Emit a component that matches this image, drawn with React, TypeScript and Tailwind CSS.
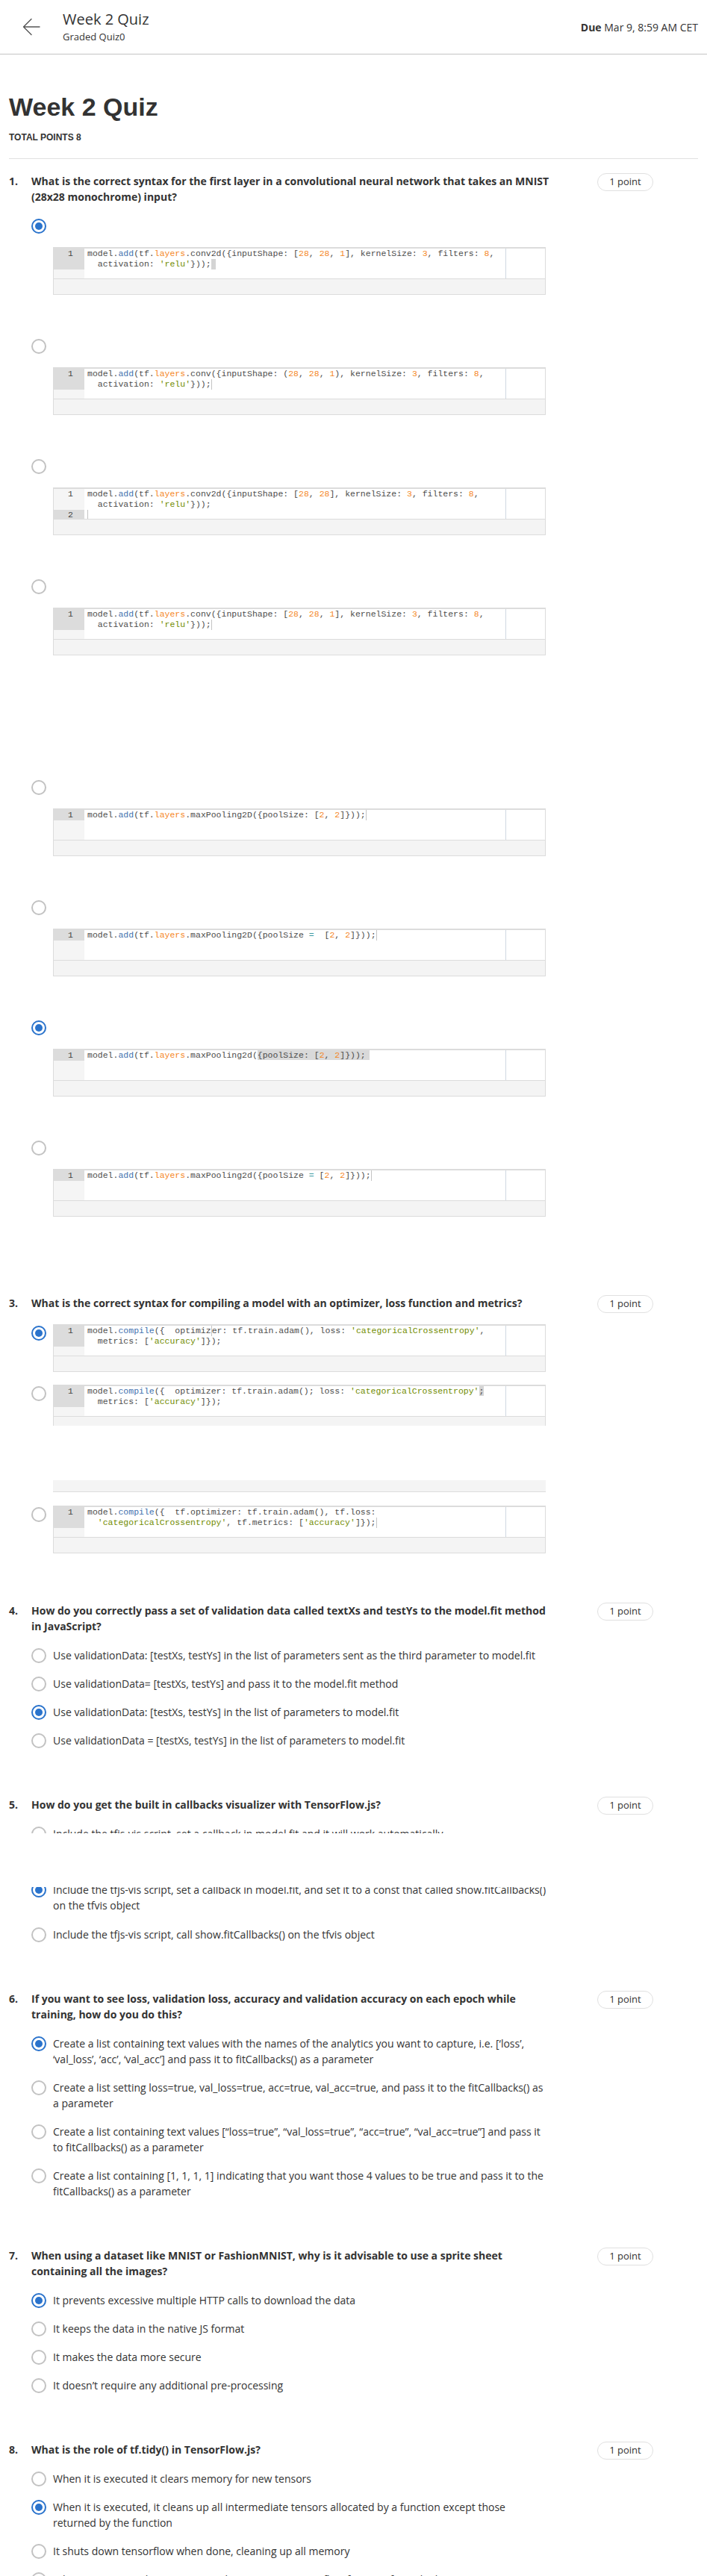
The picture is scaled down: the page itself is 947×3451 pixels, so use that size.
import React from "react";

const MONO = "font-['Liberation_Mono',monospace]";

const TOK = /('[^']*'|\b\d+\b|\badd\b|\bcompile\b|\blayers\b|=)/g;

function hl(s: string, kb = "k") {
  const parts = s.split(TOK);
  return parts.map((p, i) => {
    if (i % 2 === 0) return p ? <React.Fragment key={kb + i}>{p}</React.Fragment> : null;
    let cls = "text-[#3e999f]";
    if (p.startsWith("'")) cls = "text-[#718c00]";
    else if (/^\d+$/.test(p)) cls = "text-[#f5871f]";
    else if (p === "add" || p === "compile") cls = "text-[#4271ae]";
    else if (p === "layers") cls = "text-[#f5871f]";
    return (
      <span key={kb + i} className={cls}>
        {p}
      </span>
    );
  });
}

const Bar = () => <span className="inline-block w-px h-[14px] bg-[#c4c4c4] align-top" />;
const Blk = () => <span className="inline-block w-[6px] h-[14px] bg-[#d4d4d4] align-top" />;

type Gut = { label: string; hl: boolean; tall?: boolean };

function Code({ rows, gutter, cut }: { rows: React.ReactNode[]; gutter: Gut[]; cut?: boolean }) {
  return (
    <div className={"w-[660px] bg-white border-x border-t-2 border-[#dcdcdc] " + (cut ? "" : "border-b")}>
      <div className="flex h-[40px] overflow-hidden">
        <div className={"w-[41px] shrink-0 bg-[#f5f5f5] text-[11.5px] leading-[14px] text-[#444] " + MONO}>
          {gutter.map((g, i) => (
            <div
              key={i}
              className={(g.tall ? "h-[28px]" : "h-[14px]") + " text-right pr-[15px] " + (g.hl ? "bg-[#dcdcdc]" : "")}
            >
              {g.label}
            </div>
          ))}
        </div>
        <div
          className={
            "flex-1 pl-[4px] border-r border-[#cfd8e2] text-[11.5px] leading-[14px] text-[#4d4d4c] whitespace-pre " +
            MONO
          }
        >
          {rows.map((r, i) => (
            <div key={i} className="h-[14px]">
              {r}
            </div>
          ))}
        </div>
        <div className="w-[52px] shrink-0" />
      </div>
      <div className={(cut ? "h-[13px]" : "h-[21px]") + " bg-[#f4f4f4] border-t border-[#dcdcdc]"} />
    </div>
  );
}

function Radio({ checked }: { checked?: boolean }) {
  return checked ? (
    <span className="w-[20px] h-[20px] rounded-full border-2 border-[#2a73cc] flex items-center justify-center shrink-0 bg-white">
      <span className="w-[10px] h-[10px] rounded-full bg-[#2a73cc]" />
    </span>
  ) : (
    <span className="w-[20px] h-[20px] rounded-full border-2 border-[#c2c2c2] block shrink-0 bg-white" />
  );
}

function Opt({ checked, children }: { checked?: boolean; children: React.ReactNode }) {
  return (
    <div className="flex items-start">
      <div className="h-[21px] flex items-center shrink-0">
        <Radio checked={checked} />
      </div>
      <div className="ml-[9px] text-[14px] leading-[21px] text-[#333] whitespace-nowrap">{children}</div>
    </div>
  );
}

function OptA({ checked, code }: { checked?: boolean; code: React.ReactNode }) {
  return (
    <div className="pb-[58px]">
      <div className="h-[21px] flex items-center">
        <Radio checked={checked} />
      </div>
      <div className="mt-[18px] ml-[29px]">{code}</div>
    </div>
  );
}

function OptB({ checked, code }: { checked?: boolean; code: React.ReactNode }) {
  return (
    <div className="flex items-start">
      <div className="mt-[2px] shrink-0">
        <Radio checked={checked} />
      </div>
      <div className="ml-[9px]">{code}</div>
    </div>
  );
}

function Pill() {
  return (
    <div className="ml-[18px] w-[75px] h-[24px] shrink-0 rounded-[12px] border border-[#e0e0e0] flex items-center justify-center text-[13px] text-[#333]">
      1 point
    </div>
  );
}

function Question({
  n,
  title,
  className,
  children,
}: {
  n: number;
  title: React.ReactNode;
  className: string;
  children: React.ReactNode;
}) {
  return (
    <div className={"flex items-start " + className}>
      <div className="w-[30px] shrink-0 text-[14px] leading-[21px] font-bold text-[#333]">{n}.</div>
      <div className="w-[740px] shrink-0">
        <div className="text-[14px] leading-[21px] font-bold text-[#333] whitespace-nowrap">{title}</div>
        {children}
      </div>
      <Pill />
    </div>
  );
}

const G1: Gut[] = [{ label: "1", hl: true, tall: true }];
const G1s: Gut[] = [{ label: "1", hl: true }];

export default function App() {
  return (
    <div className="h-[3451px] overflow-hidden bg-white font-['Open_Sans',sans-serif] text-[#333]">
      <header className="h-[73px] border-b border-[#c4c4c4] flex items-start">
        <svg
          className="ml-[30px] mt-[24px] shrink-0"
          width="24"
          height="24"
          viewBox="0 0 24 24"
          fill="none"
          stroke="#555"
          strokeWidth="1.4"
          strokeLinecap="round"
          strokeLinejoin="round"
        >
          <path d="M23 12H1.5M12 1.5L1.5 12L12 22.5" />
        </svg>
        <div className="ml-[30px] mt-[12px]">
          <div className="text-[20px] leading-[28px] text-[#333]">Week 2 Quiz</div>
          <div className="text-[13px] leading-[18px] text-[#333]">Graded Quiz0</div>
        </div>
        <div className="ml-auto mr-[12px] mt-[27px] text-[14px] leading-[20px] text-[#333]">
          <span className="font-bold">Due</span> Mar 9, 8:59 AM CET
        </div>
      </header>

      <main className="px-[12px]">
        <h1 className="mt-[50px] text-[34px] leading-[40px] font-bold text-[#333] font-['Liberation_Sans',Arial,sans-serif]">
          Week 2 Quiz
        </h1>
        <div className="mt-[13px] text-[12px] leading-[16px] font-bold text-[#333] font-['Liberation_Sans',Arial,sans-serif]">
          TOTAL POINTS 8
        </div>
        <div className="mt-[20px] h-px bg-[#e0e0e0]" />

        {/* Q1 */}
        <Question
          n={1}
          className="mt-[19px]"
          title={
            <>
              What is the correct syntax for the first layer in a convolutional neural network that takes an MNIST
              <br />
              (28x28 monochrome) input?
            </>
          }
        >
          <div className="mt-[18px]">
            <OptA
              checked
              code={
                <Code
                  gutter={G1}
                  rows={[
                    hl("model.add(tf.layers.conv2d({inputShape: [28, 28, 1], kernelSize: 3, filters: 8,"),
                    <>
                      {hl("  activation: 'relu'}));")}
                      <Blk />
                    </>,
                  ]}
                />
              }
            />
            <OptA
              code={
                <Code
                  gutter={G1}
                  rows={[
                    hl("model.add(tf.layers.conv({inputShape: (28, 28, 1), kernelSize: 3, filters: 8,"),
                    <>
                      {hl("  activation: 'relu'}));")}
                      <Bar />
                    </>,
                  ]}
                />
              }
            />
            <OptA
              code={
                <Code
                  gutter={[
                    { label: "1", hl: false, tall: true },
                    { label: "2", hl: true },
                  ]}
                  rows={[
                    hl("model.add(tf.layers.conv2d({inputShape: [28, 28], kernelSize: 3, filters: 8,"),
                    hl("  activation: 'relu'}));"),
                    <>
                      <Bar />
                    </>,
                  ]}
                />
              }
            />
            <OptA
              code={
                <Code
                  gutter={G1}
                  rows={[
                    hl("model.add(tf.layers.conv({inputShape: [28, 28, 1], kernelSize: 3, filters: 8,"),
                    <>
                      {hl("  activation: 'relu'}));")}
                      <Bar />
                    </>,
                  ]}
                />
              }
            />
          </div>
        </Question>

        {/* Q2 (heading not visible) */}
        <div className="mt-[108px] ml-[30px] w-[740px]">
          <OptA
            code={
              <Code
                gutter={G1s}
                rows={[
                  <>
                    {hl("model.add(tf.layers.maxPooling2D({poolSize: [2, 2]}));")}
                    <Bar />
                  </>,
                ]}
              />
            }
          />
          <OptA
            code={
              <Code
                gutter={G1s}
                rows={[
                  <>
                    {hl("model.add(tf.layers.maxPooling2D({poolSize =  [2, 2]}));")}
                    <Bar />
                  </>,
                ]}
              />
            }
          />
          <OptA
            checked
            code={
              <Code
                gutter={G1s}
                rows={[
                  <>
                    {hl("model.add(tf.layers.maxPooling2d(")}
                    <span className="bg-[#d9d9d9]">
                      {hl("{poolSize: [2, 2]}));", "s")}
                      <span className="inline-block w-[5px]" />
                    </span>
                  </>,
                ]}
              />
            }
          />
          <OptA
            code={
              <Code
                gutter={G1s}
                rows={[
                  <>
                    {hl("model.add(tf.layers.maxPooling2d({poolSize = [2, 2]}));")}
                    <Bar />
                  </>,
                ]}
              />
            }
          />
        </div>

        {/* Q3 */}
        <Question
          n={3}
          className="mt-[47px]"
          title="What is the correct syntax for compiling a model with an optimizer, loss function and metrics?"
        >
          <div className="mt-[18px] flex flex-col">
            <OptB
              checked
              code={
                <Code
                  gutter={G1}
                  rows={[
                    <>
                      {hl("model.compile({  optimiz")}
                      <Bar />
                      {hl("er: tf.train.adam(), loss: 'categoricalCrossentropy',", "b")}
                    </>,
                    hl("  metrics: ['accuracy']});"),
                  ]}
                />
              }
            />
            <div className="mt-[17px]">
              <OptB
                code={
                  <Code
                    cut
                    gutter={G1}
                    rows={[
                      <>
                        {hl("model.compile({  optimizer: tf.train.adam(); loss: 'categoricalCrossentropy'")}
                        <span className="bg-[#d4d4d4]">;</span>
                      </>,
                      hl("  metrics: ['accuracy']});"),
                    ]}
                  />
                }
              />
            </div>
            <div className="ml-[29px] mt-[73px] w-[660px] h-[16px] bg-[#f4f4f4] border-b border-[#dcdcdc]" />
            <div className="mt-[18px]">
              <OptB
                code={
                  <Code
                    gutter={G1}
                    rows={[
                      hl("model.compile({  tf.optimizer: tf.train.adam(), tf.loss:"),
                      <>
                        {hl("  'categoricalCrossentropy', tf.metrics: ['accuracy']});")}
                        <Bar />
                      </>,
                    ]}
                  />
                }
              />
            </div>
          </div>
        </Question>

        {/* Q4 */}
        <Question
          n={4}
          className="mt-[66px]"
          title={
            <>
              How do you correctly pass a set of validation data called textXs and testYs to the model.fit method
              <br />
              in JavaScript?
            </>
          }
        >
          <div className="mt-[18px] flex flex-col gap-[17px]">
            <Opt>Use validationData: [testXs, testYs] in the list of parameters sent as the third parameter to model.fit</Opt>
            <Opt>Use validationData= [testXs, testYs] and pass it to the model.fit method</Opt>
            <Opt checked>Use validationData: [testXs, testYs] in the list of parameters to model.fit</Opt>
            <Opt>Use validationData = [testXs, testYs] in the list of parameters to model.fit</Opt>
          </div>
        </Question>

        {/* Q5 */}
        <Question n={5} className="mt-[65px]" title="How do you get the built in callbacks visualizer with TensorFlow.js?">
          <div className="mt-[18px] h-[10px] overflow-hidden">
            <Opt>Include the tfjs-vis script, set a callback in model.fit and it will work automatically</Opt>
          </div>
          <div className="h-[72px]" />
          <div className="overflow-hidden">
            <div className="mt-[-7px]">
              <Opt checked>
                Include the tfjs-vis script, set a callback in model.fit, and set it to a const that called show.fitCallbacks()
                <br />
                on the tfvis object
              </Opt>
            </div>
          </div>
          <div className="mt-[18px]">
            <Opt>Include the tfjs-vis script, call show.fitCallbacks() on the tfvis object</Opt>
          </div>
        </Question>

        {/* Q6 */}
        <Question
          n={6}
          className="mt-[65px]"
          title={
            <>
              If you want to see loss, validation loss, accuracy and validation accuracy on each epoch while
              <br />
              training, how do you do this?
            </>
          }
        >
          <div className="mt-[18px] flex flex-col gap-[17px]">
            <Opt checked>
              Create a list containing text values with the names of the analytics you want to capture, i.e. [‘loss’,
              <br />
              ‘val_loss’, ‘acc’, ‘val_acc’] and pass it to fitCallbacks() as a parameter
            </Opt>
            <Opt>
              Create a list setting loss=true, val_loss=true, acc=true, val_acc=true, and pass it to the fitCallbacks() as
              <br />a parameter
            </Opt>
            <Opt>
              Create a list containing text values [“loss=true”, “val_loss=true”, “acc=true”, “val_acc=true”] and pass it
              <br />
              to fitCallbacks() as a parameter
            </Opt>
            <Opt>
              Create a list containing [1, 1, 1, 1] indicating that you want those 4 values to be true and pass it to the
              <br />
              fitCallbacks() as a parameter
            </Opt>
          </div>
        </Question>

        {/* Q7 */}
        <Question
          n={7}
          className="mt-[65px]"
          title={
            <>
              When using a dataset like MNIST or FashionMNIST, why is it advisable to use a sprite sheet
              <br />
              containing all the images?
            </>
          }
        >
          <div className="mt-[18px] flex flex-col gap-[17px]">
            <Opt checked>It prevents excessive multiple HTTP calls to download the data</Opt>
            <Opt>It keeps the data in the native JS format</Opt>
            <Opt>It makes the data more secure</Opt>
            <Opt>It doesn’t require any additional pre-processing</Opt>
          </div>
        </Question>

        {/* Q8 */}
        <Question n={8} className="mt-[65px]" title="What is the role of tf.tidy() in TensorFlow.js?">
          <div className="mt-[18px] flex flex-col gap-[17px]">
            <Opt>When it is executed it clears memory for new tensors</Opt>
            <Opt checked>
              When it is executed, it cleans up all intermediate tensors allocated by a function except those
              <br />
              returned by the function
            </Opt>
            <Opt>It shuts down tensorflow when done, cleaning up all memory</Opt>
            <Opt>When it is executed, it wraps everything into one tensorflow function from the browser memory</Opt>
          </div>
        </Question>
      </main>
    </div>
  );
}
